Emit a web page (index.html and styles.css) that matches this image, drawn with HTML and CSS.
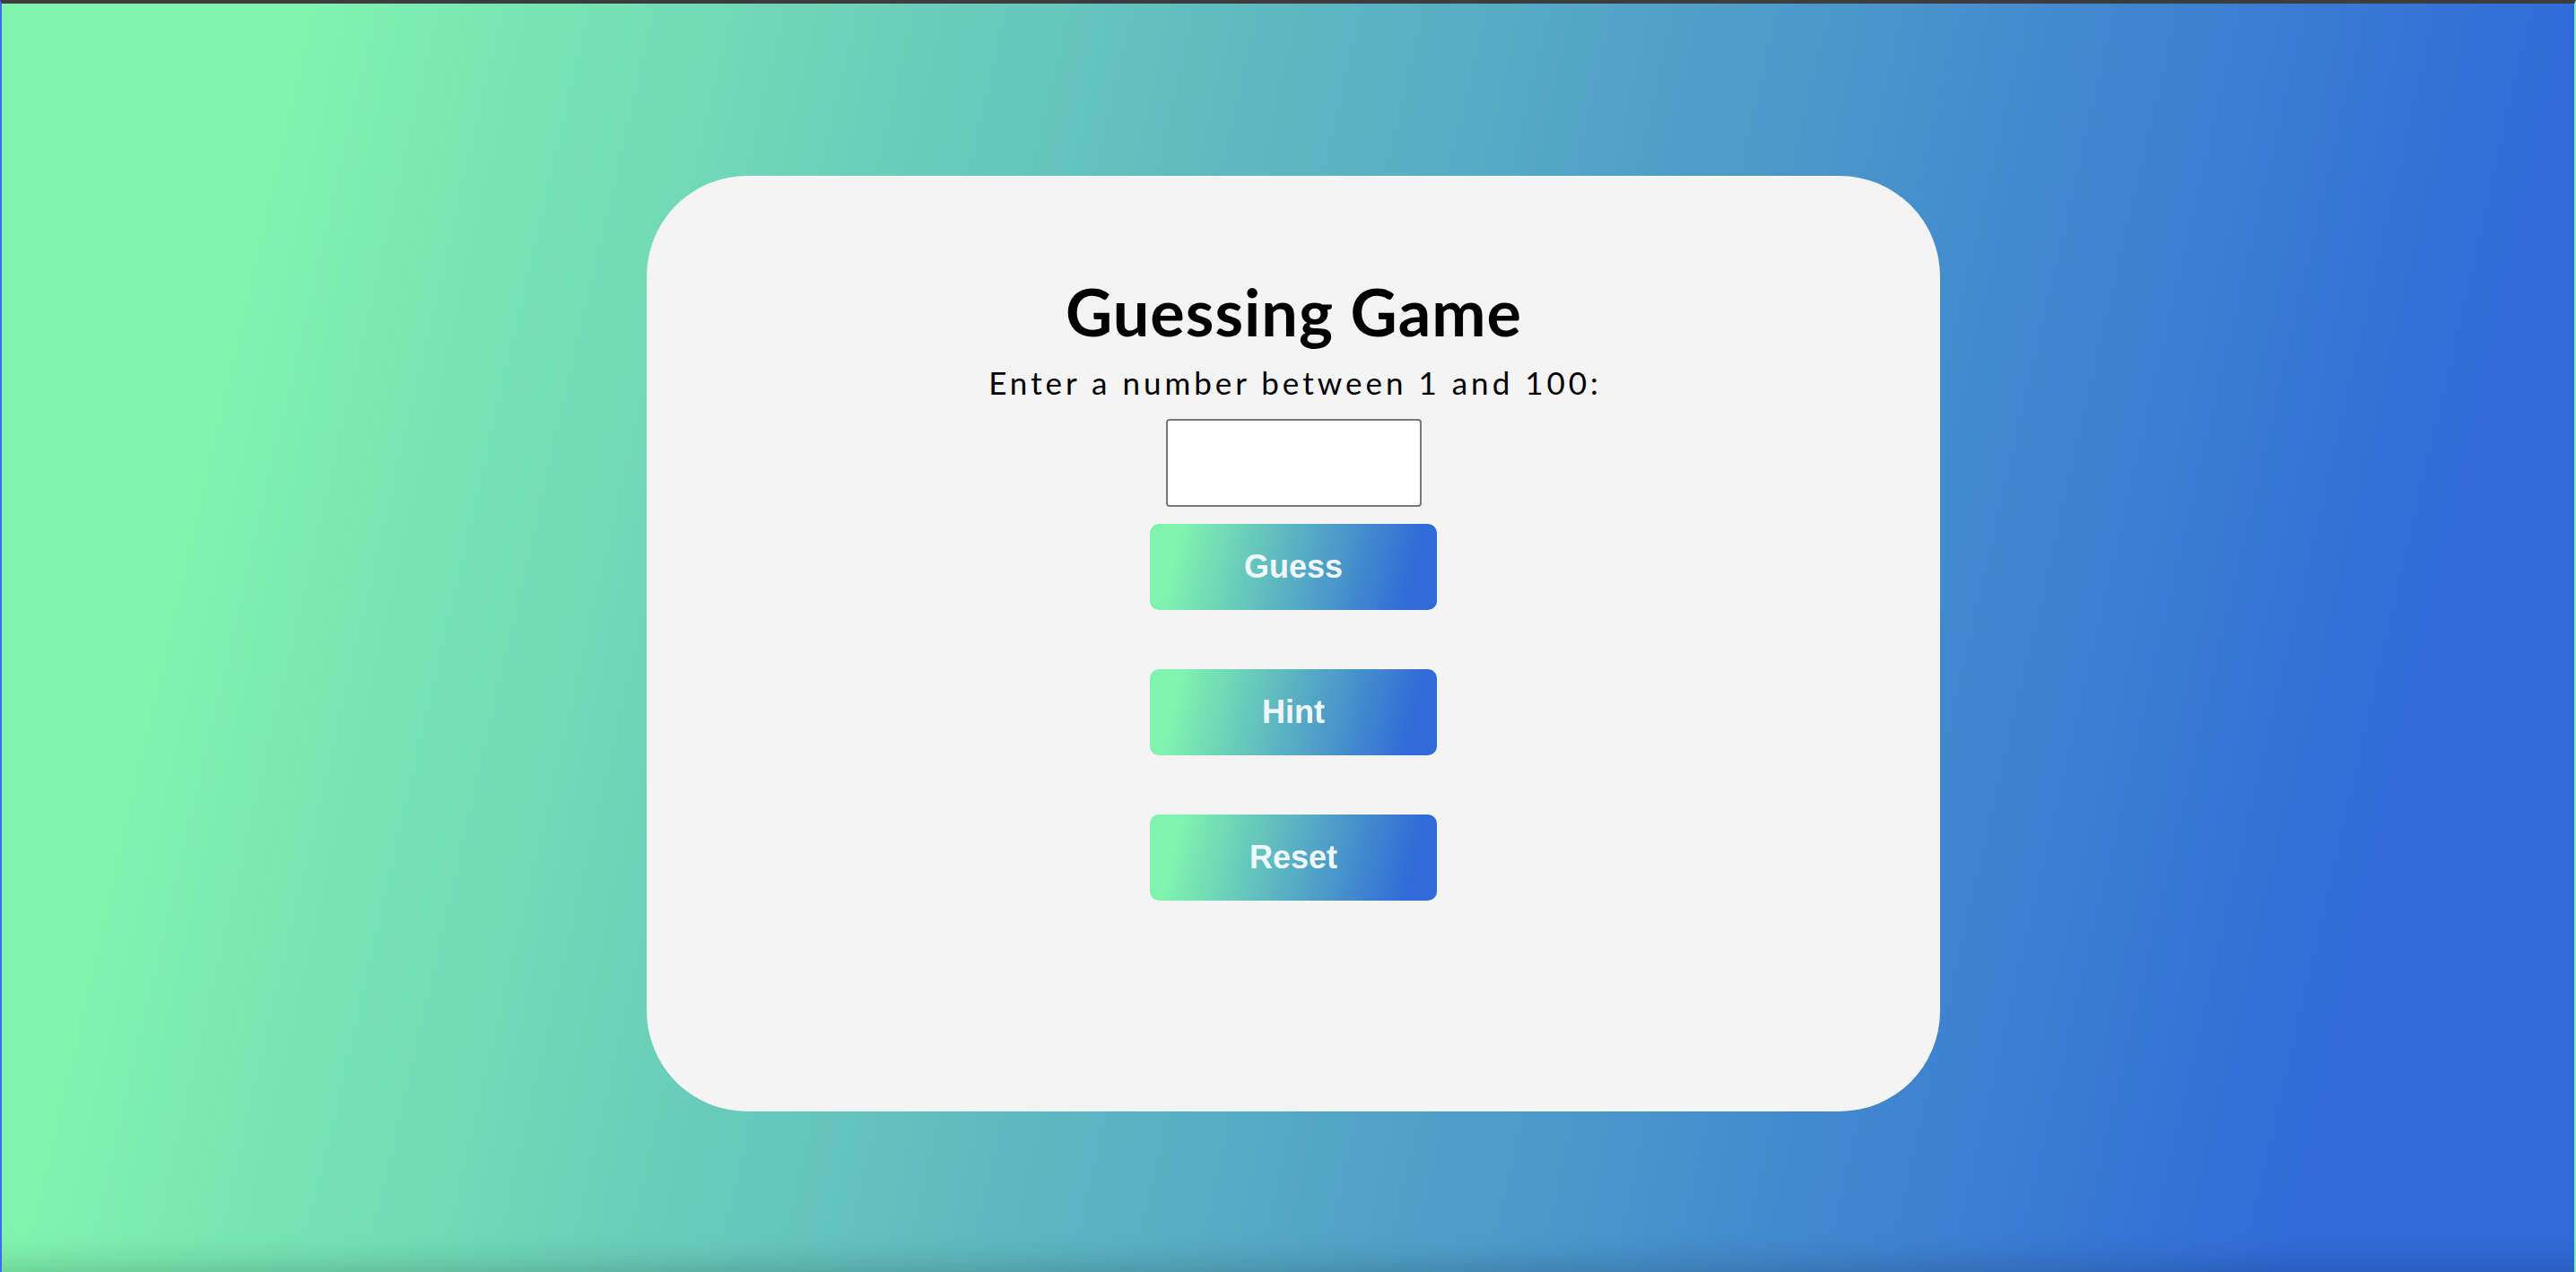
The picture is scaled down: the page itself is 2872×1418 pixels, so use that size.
FILE: index.html
```html
<!DOCTYPE html>
<html lang="en">
<head>
<meta charset="utf-8">
<title>Guessing Game</title>
<link rel="stylesheet" href="styles.css">
</head>
<body>
  <div class="page">
    <main class="card">
      <h1 class="title">Guessing Game</h1>
      <p class="prompt">Enter a number between 1 and 100:</p>
      <input class="guess-input" type="number" aria-label="Your guess">
      <div class="actions">
        <button class="btn" type="button">Guess</button>
        <button class="btn" type="button">Hint</button>
        <button class="btn" type="button">Reset</button>
      </div>
    </main>
  </div>
</body>
</html>
```

FILE: styles.css
```css
html {
  height: 100%;
  background: linear-gradient(103deg, #80f4ae 10%, #306bd8 90%);
}

body {
  margin: 0;
  min-height: 100vh;
  box-sizing: border-box;
  border-top: 4px solid #3d3d40;
  border-left: 2px solid #3a6fe0;
  border-right: 2px solid #7ff0b0;
  box-shadow: inset 0 -36px 40px -34px rgba(0, 0, 0, 0.22);
}

.page {
  display: flex;
  justify-content: center;
  align-items: flex-start;
  padding: 192px 0 0 12px;
}

.card {
  width: 1442px;
  height: 1043px;
  box-sizing: border-box;
  background: #f4f4f4;
  border-radius: 112px;
  padding-top: 115px;
  display: flex;
  flex-direction: column;
  align-items: center;
}

.title {
  margin: 0;
  padding-left: 1px;
  font-family: Lato, "DejaVu Sans", sans-serif;
  font-weight: 700;
  font-size: 72px;
  line-height: 72px;
  letter-spacing: 1px;
  color: #000;
}

.prompt {
  margin: 26px 0 0;
  padding-left: 4px;
  font-family: Lato, "DejaVu Sans", sans-serif;
  font-weight: 400;
  font-size: 35px;
  line-height: 35px;
  letter-spacing: 4px;
  color: #000;
}

.guess-input {
  margin: 23px 0 0;
  width: 285px;
  height: 98px;
  box-sizing: border-box;
  border: 2px solid #7a7a7a;
  border-radius: 4px;
  background: #fff;
  padding: 0 8px;
  font-size: 32px;
}

.actions {
  margin-top: 19px;
  display: flex;
  flex-direction: column;
  gap: 66px;
}

.btn {
  width: 320px;
  height: 96px;
  border: 0;
  border-radius: 10px;
  background: linear-gradient(103deg, #80f4ae 10%, #306bd8 90%);
  color: #f0f8ff;
  font-family: "Liberation Sans", Arial, sans-serif;
  font-weight: 700;
  font-size: 36px;
  padding: 0;
  cursor: pointer;
}
```
